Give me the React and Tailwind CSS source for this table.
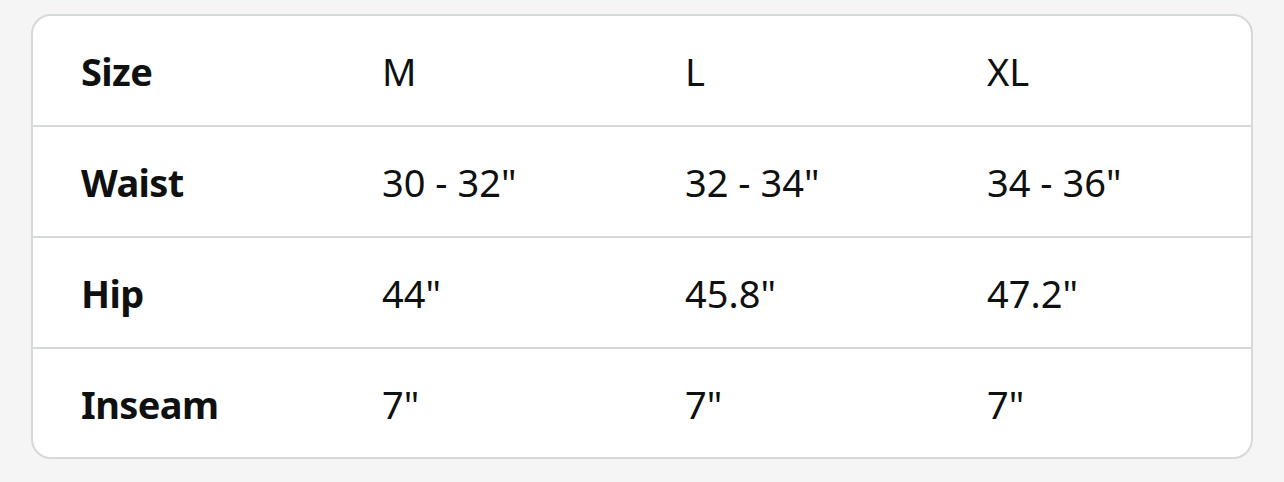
import React from "react";

const rows = [
  { label: "Size", values: ["M", "L", "XL"] },
  { label: "Waist", values: ['30 - 32"', '32 - 34"', '34 - 36"'] },
  { label: "Hip", values: ['44"', '45.8"', '47.2"'] },
  { label: "Inseam", values: ['7"', '7"', '7"'] },
];

const App = () => {
  return (
    <div
      className="h-[482px] w-[1284px] bg-[#f5f5f5] pt-[14px] px-[31px]"
      style={{ fontFamily: '"Noto Sans", "Open Sans", sans-serif' }}
    >
      <div className="bg-white border-2 border-[#d5d9d9] rounded-[20px] overflow-hidden text-[#0f1111]">
        {rows.map((row, i) => (
          <div
            key={row.label}
            className={`grid grid-cols-[301px_303px_302px_1fr] items-center pt-[2px] ${
              i < rows.length - 1 ? "h-[111px] border-b-2 border-[#d5d9d9]" : "h-[108px]"
            }`}
          >
            <div className="pl-[48px] text-[38px] font-bold tracking-[-0.6px]">{row.label}</div>
            {row.values.map((v, j) => (
              <div key={j} className="pl-[48px] text-[38px]">
                {v}
              </div>
            ))}
          </div>
        ))}
      </div>
    </div>
  );
};

export default App;
